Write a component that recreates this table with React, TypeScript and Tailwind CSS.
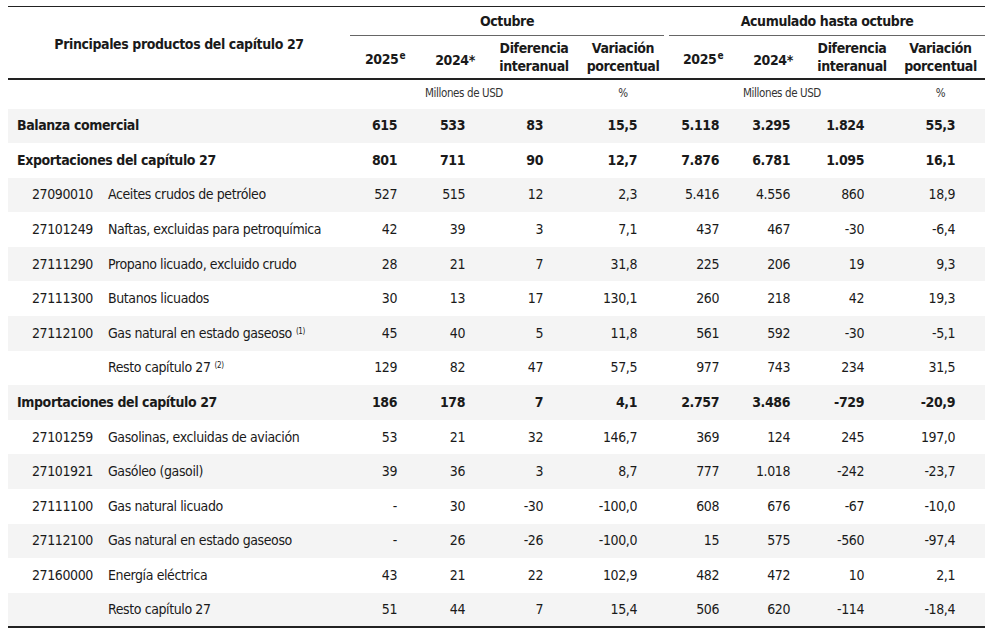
import React from 'react';

type Row = {
  kind: 'total' | 'item';
  code?: string;
  label: string;
  note?: string;
  values: string[];
};

const rows: Row[] = [
  { kind: 'total', label: 'Balanza comercial', values: ['615', '533', '83', '15,5', '5.118', '3.295', '1.824', '55,3'] },
  { kind: 'total', label: 'Exportaciones del capítulo 27', values: ['801', '711', '90', '12,7', '7.876', '6.781', '1.095', '16,1'] },
  { kind: 'item', code: '27090010', label: 'Aceites crudos de petróleo', values: ['527', '515', '12', '2,3', '5.416', '4.556', '860', '18,9'] },
  { kind: 'item', code: '27101249', label: 'Naftas, excluidas para petroquímica', values: ['42', '39', '3', '7,1', '437', '467', '-30', '-6,4'] },
  { kind: 'item', code: '27111290', label: 'Propano licuado, excluido crudo', values: ['28', '21', '7', '31,8', '225', '206', '19', '9,3'] },
  { kind: 'item', code: '27111300', label: 'Butanos licuados', values: ['30', '13', '17', '130,1', '260', '218', '42', '19,3'] },
  { kind: 'item', code: '27112100', label: 'Gas natural en estado gaseoso', note: '(1)', values: ['45', '40', '5', '11,8', '561', '592', '-30', '-5,1'] },
  { kind: 'item', label: 'Resto capítulo 27', note: '(2)', values: ['129', '82', '47', '57,5', '977', '743', '234', '31,5'] },
  { kind: 'total', label: 'Importaciones del capítulo 27', values: ['186', '178', '7', '4,1', '2.757', '3.486', '-729', '-20,9'] },
  { kind: 'item', code: '27101259', label: 'Gasolinas, excluidas de aviación', values: ['53', '21', '32', '146,7', '369', '124', '245', '197,0'] },
  { kind: 'item', code: '27101921', label: 'Gasóleo (gasoil)', values: ['39', '36', '3', '8,7', '777', '1.018', '-242', '-23,7'] },
  { kind: 'item', code: '27111100', label: 'Gas natural licuado', values: ['-', '30', '-30', '-100,0', '608', '676', '-67', '-10,0'] },
  { kind: 'item', code: '27112100', label: 'Gas natural en estado gaseoso', values: ['-', '26', '-26', '-100,0', '15', '575', '-560', '-97,4'] },
  { kind: 'item', code: '27160000', label: 'Energía eléctrica', values: ['43', '21', '22', '102,9', '482', '472', '10', '2,1'] },
  { kind: 'item', label: 'Resto capítulo 27', values: ['51', '44', '7', '15,4', '506', '620', '-114', '-18,4'] },
];

// right padding per numeric column, so numbers line up like the source
const padR = ['pr-[23px]', 'pr-[25px]', 'pr-[35px]', 'pr-[31px]', 'pr-[19px]', 'pr-[18px]', 'pr-[32px]', 'pr-[30px]'];

const font = "font-['DejaVu_Sans_Condensed','Liberation_Sans',sans-serif]";

function Year({ y, sup }: { y: string; sup: string }) {
  return (
    <span className="whitespace-nowrap">
      {y}
      <span className="text-[10px] relative -top-[5px] ml-[1px]">{sup}</span>
    </span>
  );
}

export default function App() {
  return (
    <div className={`w-[990px] h-[633px] bg-white pt-[6px] pl-[8px] text-[#1a1a1a] tracking-[-0.4px] ${font}`}>
      <table className="w-[977px] border-collapse table-fixed">
        <colgroup>
          <col className="w-[342px]" />
          <col className="w-[70px]" />
          <col className="w-[70px]" />
          <col className="w-[88px]" />
          <col className="w-[90px]" />
          <col className="w-[70px]" />
          <col className="w-[70px]" />
          <col className="w-[88px]" />
          <col className="w-[89px]" />
        </colgroup>
        <thead>
          <tr className="h-[30px] border-t-[1.5px] border-[#222]">
            <th rowSpan={2} className="text-[14px] font-bold text-center align-middle pt-[4px] border-b-[2px] border-[#222]">
              Principales productos del capítulo 27
            </th>
            <th colSpan={4} className="text-[14px] font-bold text-center p-0">
              <div className="h-[29px] flex items-center justify-center border-b border-[#666] mr-[4px]">Octubre</div>
            </th>
            <th colSpan={4} className="text-[14px] font-bold text-center p-0">
              <div className="h-[29px] flex items-center justify-center border-b border-[#666] ml-[1px]">Acumulado hasta octubre</div>
            </th>
          </tr>
          <tr className="h-[42px] border-b-[2px] border-[#222] text-[14px] font-bold leading-[18px]">
            <th className="text-center pt-[6px]"><Year y="2025" sup="e" /></th>
            <th className="text-center pt-[6px]">2024*</th>
            <th className="text-center">Diferencia<br />interanual</th>
            <th className="text-center">Variación<br />porcentual</th>
            <th className="text-center pt-[6px]"><Year y="2025" sup="e" /></th>
            <th className="text-center pt-[6px]">2024*</th>
            <th className="text-center">Diferencia<br />interanual</th>
            <th className="text-center">Variación<br />porcentual</th>
          </tr>
        </thead>
        <tbody>
          <tr className="h-[30px] text-[11.5px] text-[#333]">
            <td />
            <td colSpan={3} className="text-center">Millones de USD</td>
            <td className="text-center">%</td>
            <td colSpan={3} className="text-center">Millones de USD</td>
            <td className="text-center">%</td>
          </tr>
          {rows.map((r, i) => (
            <tr
              key={i}
              className={`h-[34.6px] text-[14px] ${i % 2 === 0 ? 'bg-[#f4f4f4]' : 'bg-white'} ${r.kind === 'total' ? 'font-bold' : ''} ${i === rows.length - 1 ? 'border-b-[2px] border-[#222]' : ''}`}
            >
              <td className="p-0 whitespace-nowrap">
                {r.kind === 'total' ? (
                  <span className="pl-[9px]">{r.label}</span>
                ) : (
                  <div className="flex">
                    <span className="w-[100px] pl-[24px] shrink-0">{r.code}</span>
                    <span>
                      {r.label}
                      {r.note && <span className="text-[8px] ml-[4px] relative -top-[4px]">{r.note}</span>}
                    </span>
                  </div>
                )}
              </td>
              {r.values.map((v, j) => (
                <td key={j} className={`text-right ${padR[j]}`}>{v}</td>
              ))}
            </tr>
          ))}
        </tbody>
      </table>
    </div>
  );
}
